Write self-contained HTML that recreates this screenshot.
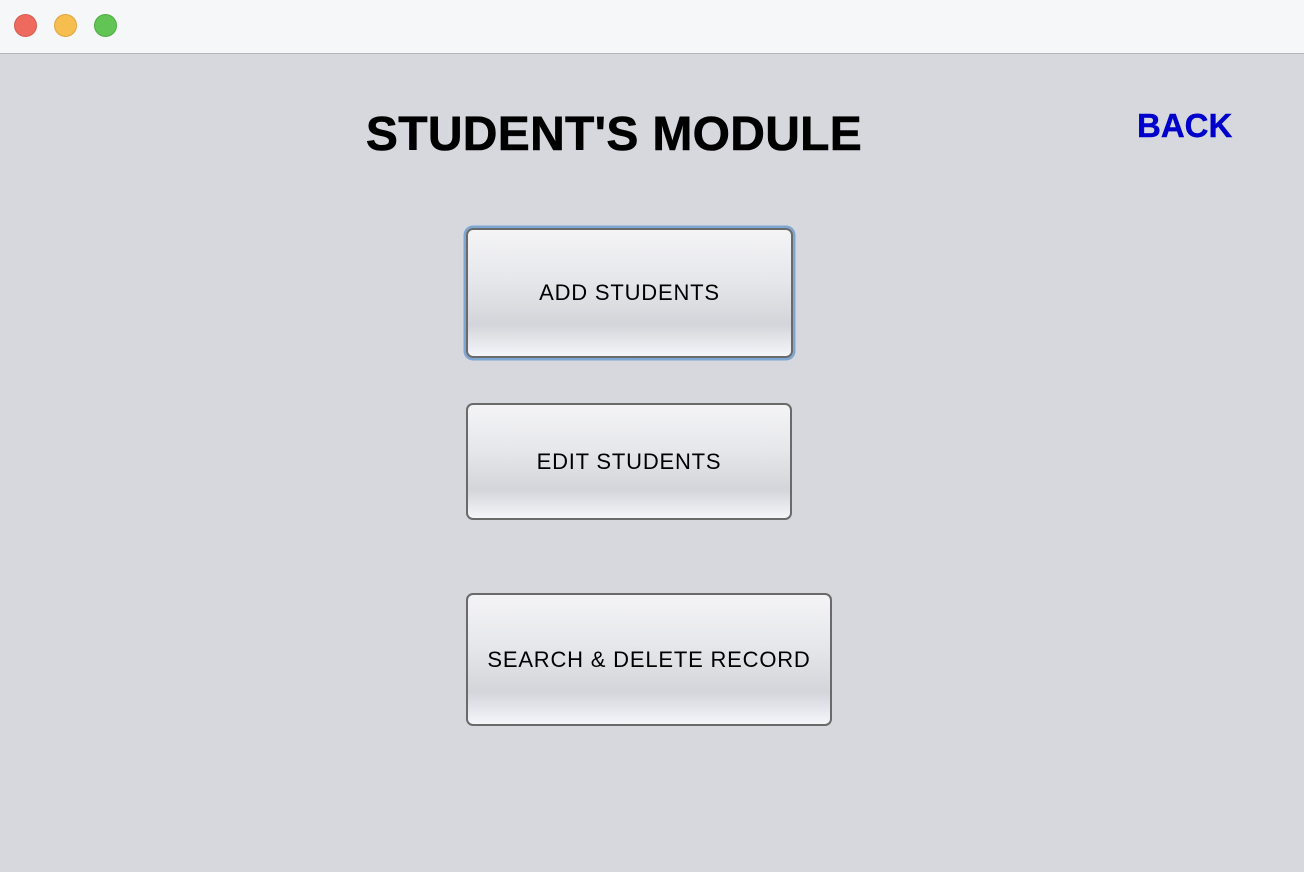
<!DOCTYPE html>
<html><head><style>
body{margin:0;width:1304px;height:872px;background:#d6d8de;font-family:"Liberation Sans",sans-serif;position:relative;overflow:hidden}
.tb{position:absolute;left:0;top:0;width:1304px;height:53px;background:#f6f7f9;border-bottom:1px solid #b4b6ba}
.dot{position:absolute;top:14px;width:23px;height:23px;border-radius:50%}
.t{position:absolute;left:0;width:1228px;text-align:center;top:107px;font-size:48px;font-weight:bold;color:#000;letter-spacing:0.3px;-webkit-text-stroke:0.6px #000}
.back{position:absolute;left:1137px;top:107px;font-size:33px;font-weight:bold;color:#0000cc;-webkit-text-stroke:0.4px #0000cc}
.b{position:absolute;box-sizing:border-box;border:2px solid #6a6a6a;border-radius:7px;background:linear-gradient(#f4f4f6 0%,#e6e7ea 40%,#d3d5da 75%,#f5f6fa 100%);display:flex;align-items:center;justify-content:center;font-size:22px;color:#000;letter-spacing:0.8px}
</style></head><body>
<div class="tb">
<div class="dot" style="left:14px;background:#ee6a5e;border:1px solid #d85a50;box-sizing:border-box"></div>
<div class="dot" style="left:54px;background:#f5be4f;border:1px solid #dea63e;box-sizing:border-box"></div>
<div class="dot" style="left:94px;background:#61c454;border:1px solid #4fac43;box-sizing:border-box"></div>
</div>
<div class="t">STUDENT'S MODULE</div>
<div class="back">BACK</div>
<div class="b" style="left:466px;top:228px;width:327px;height:130px;box-shadow:0 0 0 2.5px #7ea6d2">ADD STUDENTS</div>
<div class="b" style="left:466px;top:403px;width:326px;height:117px">EDIT STUDENTS</div>
<div class="b" style="left:466px;top:593px;width:366px;height:133px">SEARCH &amp; DELETE RECORD</div>
</body></html>
